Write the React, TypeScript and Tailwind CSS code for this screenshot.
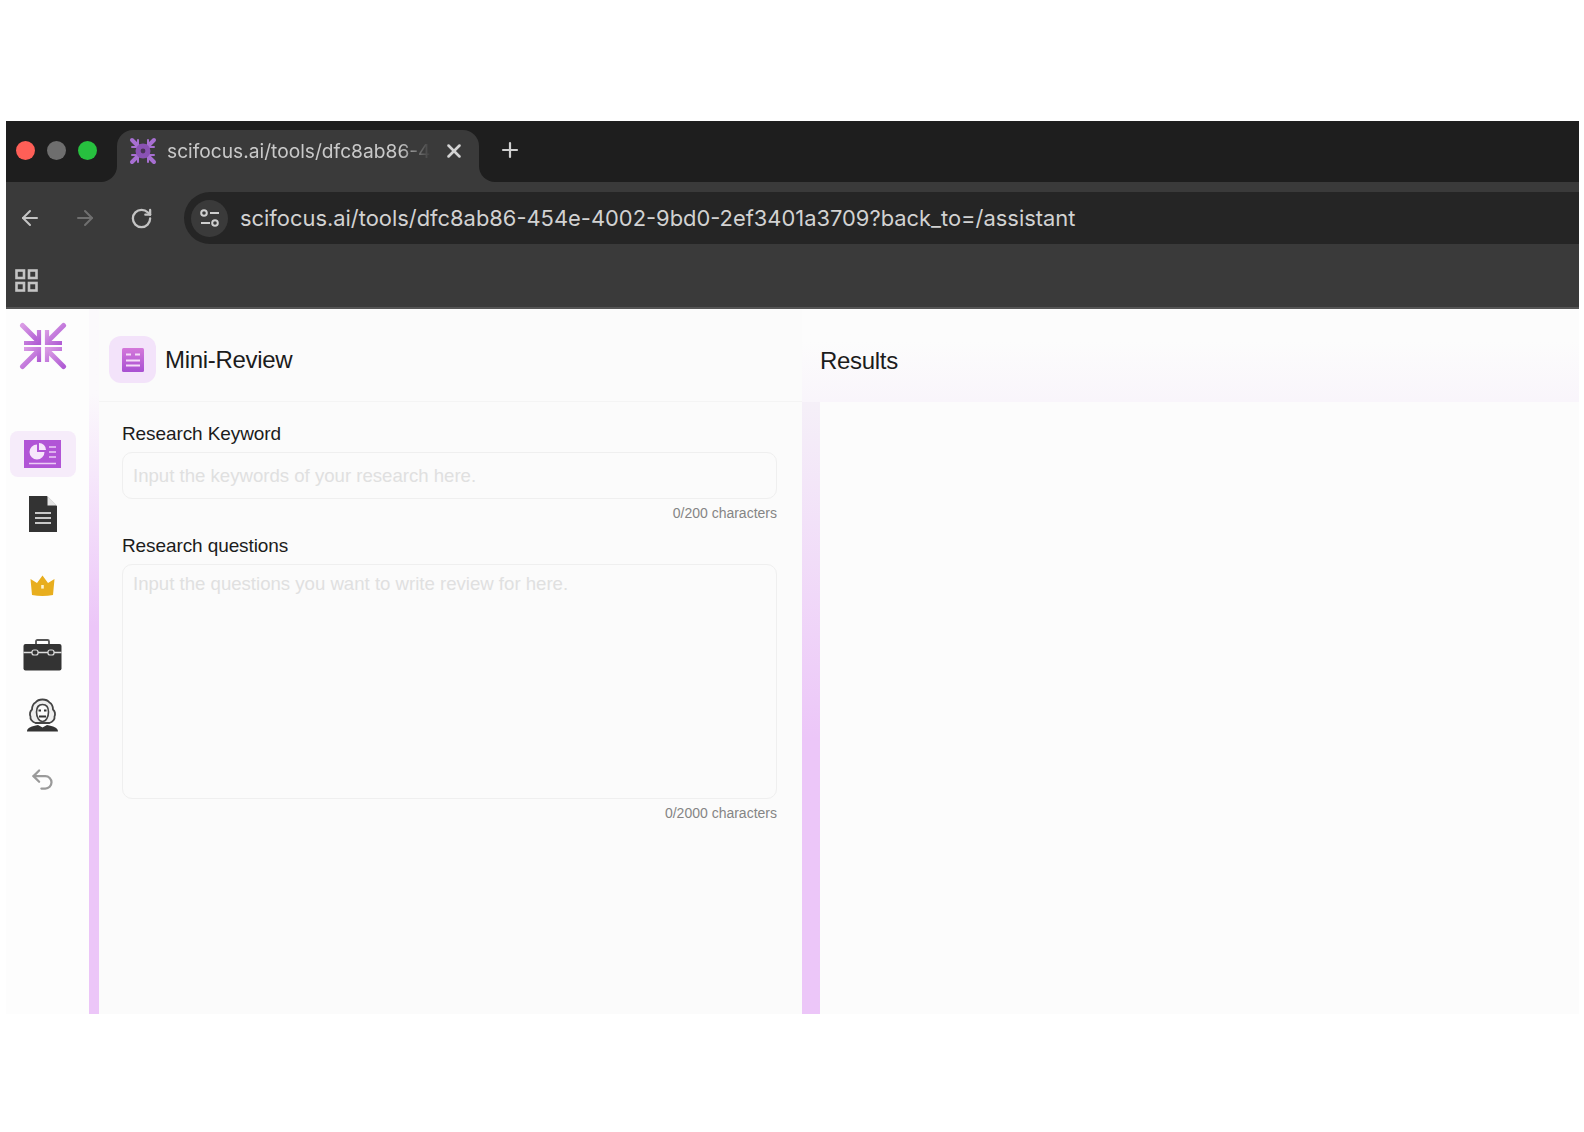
import { ArrowLeft, ArrowRight, Plus, RotateCw, Undo2, X } from "lucide-react";

function Favicon() {
  return (
    <svg width="28" height="28" viewBox="0 0 28 28" className="flex-none">
      <g stroke="#a76fd2" strokeWidth="4" strokeLinecap="round">
        <path d="M3 3L11 11M25 3L17 11M3 25L11 17M25 25L17 17" />
        <path d="M9 3V9M19 3V9M9 25V19M19 25V19M3 10H9M3 18H9M25 10H19M25 18H19" strokeWidth="2" />
      </g>
      <circle cx="14" cy="14" r="7.500" fill="#8a52b4" />
      <circle cx="14" cy="14" r="2.400" fill="#4a3358" />
    </svg>
  );
}

function Logo() {
  return (
    <svg width="48" height="48" viewBox="0 0 48 48">
      <defs>
        <linearGradient id="lg" x1="0" y1="0" x2="1" y2="1">
          <stop offset="0" stopColor="#d99be4" />
          <stop offset="1" stopColor="#b05cd4" />
        </linearGradient>
      </defs>
      <g stroke="url(#lg)" strokeWidth="5" fill="none" strokeLinecap="round" strokeLinejoin="miter">
        <path d="M3.500 3.500L19 19" />
        <path d="M44.500 3.500L29 19" />
        <path d="M3.500 44.500L19 29" />
        <path d="M44.500 44.500L29 29" />
        <path d="M20 8V21H5" strokeWidth="4.200" strokeLinecap="butt" />
        <path d="M28 8V21H43" strokeWidth="4.200" strokeLinecap="butt" />
        <path d="M20 40V27H5" strokeWidth="4.200" strokeLinecap="butt" />
        <path d="M28 40V27H43" strokeWidth="4.200" strokeLinecap="butt" />
      </g>
    </svg>
  );
}

function SlideIcon() {
  return (
    <svg width="37" height="28" viewBox="0 0 37 28">
      <rect width="37" height="28" fill="#b155d6" />
      <path d="M13 4.500a7.500 7.500 0 1 0 7.500 7.500H13z" fill="#f6e6fb" />
      <path d="M15 3a7 7 0 0 1 7 7h-7z" fill="#f6e6fb" />
      <path d="M25 7h7M25 12h7M25 17h7M5 23.500h27" stroke="#eccdf6" strokeWidth="1.600" />
    </svg>
  );
}

function DocIcon() {
  return (
    <svg width="28" height="36" viewBox="0 0 28 36">
      <path d="M0 0H18L28 10V36H0z" fill="#333333" />
      <path d="M18.500 0L28 9.500H18.500z" fill="#e4e4e4" />
      <path d="M6 17H22M6 22H22M6 27H22" stroke="#c8c8c8" strokeWidth="1.800" />
    </svg>
  );
}

function CrownIcon() {
  return (
    <svg width="25" height="22" viewBox="0 0 25 22">
      <path d="M0.500 4L7 8L12.500 0.500L18 8L24.500 4L23 20Q12.500 22 2 20z" fill="#e8ae1e" />
      <rect x="11.200" y="10" width="2.600" height="3.600" fill="#fdf3cf" />
    </svg>
  );
}

function BagIcon() {
  return (
    <svg width="39" height="32" viewBox="0 0 39 32">
      <path d="M13 6V2.500Q13 1 14.500 1H24.500Q26 1 26 2.500V6" fill="none" stroke="#555555" strokeWidth="1.800" />
      <rect x="0.500" y="5" width="38" height="26.500" rx="2" fill="#333333" />
      <path d="M0.500 13.500H38.500" stroke="#dddddd" strokeWidth="1.300" />
      <rect x="9" y="11" width="6" height="5" rx="2" fill="#333333" stroke="#dddddd" strokeWidth="1.200" />
      <rect x="25" y="11" width="6" height="5" rx="2" fill="#333333" stroke="#dddddd" strokeWidth="1.200" />
    </svg>
  );
}

function ScholarIcon() {
  return (
    <svg width="33" height="34" viewBox="0 0 33 34">
      <path
        d="M16.500 1.500C13 1.500 11 2.500 9.500 4.500C7 6 6 9 6 11.500C4 13.500 3.500 16 4.500 18.500C4 21 6 24 9.500 25H23.500C27 24 29 21 28.500 18.500C29.500 16 29 13.500 27 11.500C27 9 26 6 23.500 4.500C22 2.500 20 1.500 16.500 1.500Z"
        fill="#eeeeee"
        stroke="#444444"
        strokeWidth="1.800"
      />
      <path d="M10.500 14C10.500 9 13 6.500 16.500 6.500C20 6.500 22.500 9 22.500 14C22.500 19 20 23.500 16.500 23.500C13 23.500 10.500 19 10.500 14Z" fill="#fbfbfb" stroke="#444444" strokeWidth="1.600" />
      <path d="M12.500 12.500H15M18 12.500H20.500M13 18.500H20" stroke="#333333" strokeWidth="1.800" />
      <path d="M1 33.500C1 29.500 6 28 12 27L16.500 29.500L21 27C27 28 32 29.500 32 33.500Z" fill="#333333" />
    </svg>
  );
}

function MiniIcon() {
  return (
    <svg width="22" height="24" viewBox="0 0 22 24">
      <defs>
        <linearGradient id="mi" x1="0" y1="0" x2="0" y2="1">
          <stop offset="0" stopColor="#d478da" />
          <stop offset="1" stopColor="#a850d2" />
        </linearGradient>
      </defs>
      <rect width="22" height="24" rx="1.500" fill="url(#mi)" />
      <path d="M4 6.500H9M13 6.500H18M4 12.500H18M4 17.500H18" stroke="#f5dcf8" strokeWidth="1.800" />
    </svg>
  );
}

function Field({
  label,
  count,
  placeholder,
  multi,
}: {
  label: string;
  count: string;
  placeholder: string;
  multi?: boolean;
}) {
  return (
    <div className="flex flex-col">
      <div className="text-[19px] leading-[24px] tracking-[-0.1px] text-[#1c1c1c]">{label}</div>
      {multi ? (
        <textarea
          placeholder={placeholder}
          className="mt-[6px] h-[235px] w-full resize-none rounded-[10px] border border-[#efefef] bg-[#fbfbfb] px-[10px] py-[8px] text-[18.600px] leading-[22px] outline-none placeholder:text-[#e0e0e0]"
        />
      ) : (
        <input
          placeholder={placeholder}
          className="mt-[6px] h-[47px] w-full rounded-[10px] border border-[#efefef] bg-[#fbfbfb] px-[10px] text-[18.600px] outline-none placeholder:text-[#e0e0e0]"
        />
      )}
      <div className="mt-[5px] text-right text-[14px] leading-[18px] text-[#858585]">{count}</div>
    </div>
  );
}

export default function App() {
  return (
    <div className="h-[1132px] w-full overflow-hidden bg-white pl-[6px] pr-[5px] pt-[121px] font-['Liberation_Sans',sans-serif]">
      <div className="flex flex-col font-['Inter',sans-serif]">
        {/* tab strip */}
        <div className="flex h-[61px] bg-[#3a3a3a]">
          <div className="flex w-[111px] flex-none items-center gap-[12px] rounded-br-[16px] bg-[#1e1e1e] pb-[3px] pl-[10px]">
            <span className="h-[19px] w-[19px] rounded-full bg-[#fe5f57]" />
            <span className="h-[19px] w-[19px] rounded-full bg-[#6e6e6e]" />
            <span className="h-[19px] w-[19px] rounded-full bg-[#27c13f]" />
          </div>
          <div className="w-[362px] flex-none bg-[#1e1e1e] pt-[9px]">
            <div className="flex h-[52px] items-center rounded-t-[16px] bg-[#3a3a3a] pb-[10px] pl-[12px]">
              <Favicon />
              <span className="ml-[10px] w-[264px] whitespace-nowrap text-[19.200px] text-[#c9c9c9] [mask-image:linear-gradient(to_right,black_88%,transparent)]">
                scifocus.ai/tools/dfc8ab86-4
              </span>
              <X size={22} strokeWidth={2.8} className="ml-[12px] flex-none text-[#d4d4d4]" />
            </div>
          </div>
          <div className="flex flex-1 items-center rounded-bl-[16px] bg-[#1e1e1e] pb-[3px] pl-[19px]">
            <Plus size={24} strokeWidth={2.2} className="text-[#cfcfcf]" />
          </div>
        </div>
        {/* toolbar */}
        <div className="flex h-[62px] items-center bg-[#3a3a3a] pt-[10px]">
          <div className="flex w-[178px] flex-none items-center pl-[12px]">
            <ArrowLeft size={24} strokeWidth={2} className="text-[#c4c4c4]" />
            <ArrowRight size={24} strokeWidth={2} className="ml-[31px] text-[#6f6f6f]" />
            <RotateCw size={23} strokeWidth={2.4} className="ml-[33px] text-[#c4c4c4]" />
          </div>
          <div className="flex h-[52px] flex-1 items-center rounded-l-full bg-[#252525] pl-[7px]">
            <div className="flex h-[37px] w-[37px] flex-none items-center justify-center rounded-full bg-[#3a3a3a]">
              <svg width="22" height="20" viewBox="0 0 22 20" fill="none" stroke="#cfcfcf" strokeWidth="2">
                <circle cx="5" cy="5" r="2.800" />
                <path d="M11 5H20M2 15H11" />
                <circle cx="16" cy="15" r="2.800" />
              </svg>
            </div>
            <span className="ml-[12px] whitespace-nowrap text-[21.900px] text-[#d2d2d2]">
              scifocus.ai/tools/dfc8ab86-454e-4002-9bd0-2ef3401a3709?back_to=/assistant
            </span>
          </div>
        </div>
        {/* bookmarks bar */}
        <div className="flex h-[65px] items-center border-b-2 border-[#555555] bg-[#3a3a3a] pl-[9px] pt-[9px]">
          <svg width="23" height="23" viewBox="0 0 23 23" fill="none" stroke="#c4c4c4" strokeWidth="2.600">
            <rect x="1.500" y="1.500" width="7.500" height="7.500" />
            <rect x="14" y="1.500" width="7.500" height="7.500" />
            <rect x="1.500" y="14" width="7.500" height="7.500" />
            <rect x="14" y="14" width="7.500" height="7.500" />
          </svg>
        </div>
      </div>

      {/* page */}
      <div className="flex h-[705px] bg-[#fdfdfd]">
        <aside className="flex w-[83px] flex-none flex-col items-center">
          <div className="ml-[-10px] mt-[13px]">
            <Logo />
          </div>
          <div className="ml-[-10px] mt-[61px] flex h-[46px] w-[66px] items-center justify-center rounded-[8px] bg-[#f6ecfa]">
            <SlideIcon />
          </div>
          <div className="ml-[-10px] mt-[19px]">
            <DocIcon />
          </div>
          <div className="ml-[-10px] mt-[43px]">
            <CrownIcon />
          </div>
          <div className="ml-[-10px] mt-[42px]">
            <BagIcon />
          </div>
          <div className="ml-[-10px] mt-[27px]">
            <ScholarIcon />
          </div>
          <div className="ml-[-10px] mt-[34px]">
            <Undo2 size={27} strokeWidth={2} className="text-[#9a9a9a]" />
          </div>
        </aside>
        <div className="w-[10px] flex-none bg-gradient-to-b from-[#fbf9fc] from-[12%] to-[#ecc6f8] to-[45%]" />
        <div className="flex w-[703px] flex-none flex-col bg-[#fbfbfb]">
          <div className="flex h-[93px] flex-none items-center gap-[9px] border-b border-[#f4f4f4] pl-[10px] pt-[9px]">
            <div className="flex h-[47px] w-[47px] items-center justify-center rounded-[12px] bg-[#f3e3fa]">
              <MiniIcon />
            </div>
            <span className="text-[24px] tracking-[-0.3px] text-[#1c1c1c]">Mini-Review</span>
          </div>
          <div className="flex flex-col gap-[12px] pl-[23px] pr-[25px] pt-[20px]">
            <Field label="Research Keyword" count="0/200 characters" placeholder="Input the keywords of your research here." />
            <Field multi label="Research questions" count="0/2000 characters" placeholder="Input the questions you want to write review for here." />
          </div>
        </div>
        <div className="flex min-w-0 flex-1 flex-col">
          <div className="flex h-[93px] flex-none items-center bg-gradient-to-b from-[#fcfcfc] from-[35%] to-[#f9f5fb] pl-[18px] pt-[11px]">
            <span className="text-[24px] tracking-[-0.3px] text-[#1c1c1c]">Results</span>
          </div>
          <div className="flex flex-1">
            <div className="w-[18px] flex-none bg-gradient-to-b from-[#f5f0f8] to-[#ecc6f8] to-[55%]" />
            <div className="flex-1 bg-[#fcfcfc]" />
          </div>
        </div>
      </div>
    </div>
  );
}
